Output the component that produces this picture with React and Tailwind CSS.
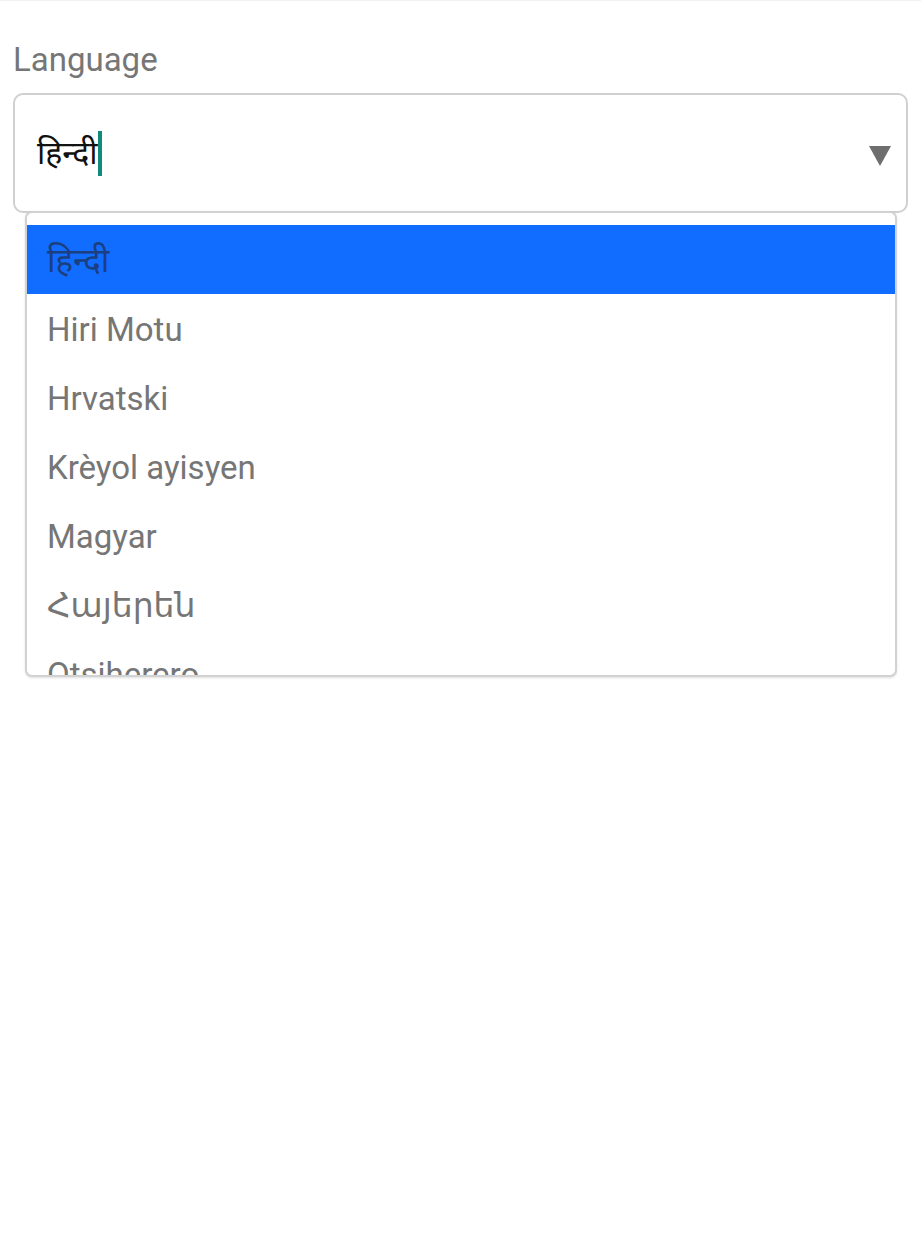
import { useState } from 'react';

const languages = ['हिन्दी', 'Hiri Motu', 'Hrvatski', 'Krèyol ayisyen', 'Magyar', 'Հայերեն', 'Otsiherero'];

export default function App() {
  const [selected] = useState('हिन्दी');

  return (
    <div className="min-h-[1254px] bg-white border-t border-[#f1f1f1] font-['Roboto','Noto_Sans','DejaVu_Sans',sans-serif]">
      <div className="px-[13px] pt-[40px]">
        <label className="block text-[33px] leading-[37px] text-[#767676]">Language</label>
        <div className="relative mt-[15px]">
          <div className="h-[120px] flex items-center justify-between rounded-[10px] border-2 border-[#d0d0d0] bg-white pl-[22px] pr-[15px]">
            <div className="flex items-center">
              <span className="text-[32px] text-[#111]">{selected}</span>
              <span className="ml-[1px] w-[4px] h-[45px] bg-[#0f8a7c]" />
            </div>
            <svg width="22" height="20" viewBox="0 0 22 20" className="mt-[6px]">
              <polygon points="0,0 22,0 11,20" fill="#6e6e6e" />
            </svg>
          </div>
          <ul className="absolute left-[12px] right-[11px] top-[118px] h-[466px] overflow-hidden rounded-[7px] border-2 border-[#d2d2d2] bg-white pt-[12px] shadow-sm">
            {languages.map((lang) => (
              <li
                key={lang}
                className={
                  lang === selected
                    ? 'h-[69px] flex items-center pt-[2px] px-[20px] bg-[#116dff] text-[33px] text-[#1b3f80]'
                    : 'h-[69px] flex items-center pt-[2px] px-[20px] text-[33px] text-[#767676]'
                }
              >
                {lang}
              </li>
            ))}
          </ul>
        </div>
      </div>
    </div>
  );
}
